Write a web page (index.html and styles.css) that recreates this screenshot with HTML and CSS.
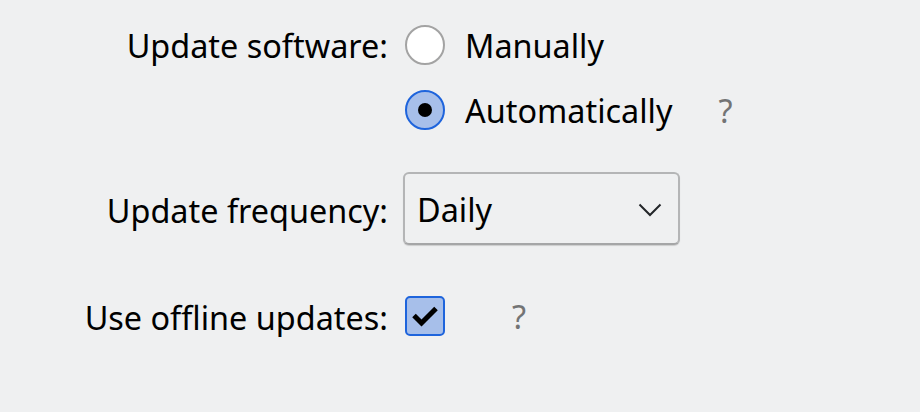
FILE: index.html
```html
<!DOCTYPE html>
<html lang="en">
<head>
    <meta charset="UTF-8">
    <title>Updates</title>
    <link rel="stylesheet" href="styles.css">
</head>
<body>
    <div class="form">
        <!-- Update software -->
        <div class="label row-software">Update software:</div>
        <div class="field">
            <label class="option">
                <span class="radio"></span>
                <span>Manually</span>
            </label>
            <label class="option">
                <span class="radio checked"></span>
                <span>Automatically</span>
                <span class="help help-auto">?</span>
            </label>
        </div>

        <!-- Frequency -->
        <div class="label row-freq">Update frequency:</div>
        <div class="field field-freq">
            <div class="select">
                <span>Daily</span>
                <svg class="chevron" width="24" height="14" viewBox="0 0 24 14">
                    <path d="M1.5 1.5 L12 12 L22.5 1.5" fill="none" stroke="#232629" stroke-width="2"/>
                </svg>
            </div>
        </div>

        <!-- Offline -->
        <div class="label row-offline">Use offline updates:</div>
        <div class="field field-offline">
            <span class="checkbox">
                <svg width="28" height="24" viewBox="0 0 28 24">
                    <path d="M3 11.5 L10.5 19 L25 4.5" fill="none" stroke="#000" stroke-width="5"/>
                </svg>
            </span>
            <span class="help help-offline">?</span>
        </div>
    </div>
</body>
</html>
```

FILE: styles.css
```css
body {
    margin: 0;
    background: #eff0f1;
    font-family: "Noto Sans", sans-serif;
    font-size: 32.4px;
    color: #232629;
}

.form {
    display: grid;
    grid-template-columns: 388px auto;
    column-gap: 17px;
    padding-top: 25px;
}

.label {
    text-align: right;
    color: #000;
    line-height: 40px;
}

.field {
    color: #000;
}

/* Radio options */
.option {
    display: flex;
    align-items: center;
    height: 40px;
    gap: 20px;
}

.option + .option {
    margin-top: 25px;
}

.radio {
    width: 36px;
    height: 36px;
    border: 2px solid #a3a3a3;
    border-radius: 50%;
    background: #fff;
    display: flex;
    align-items: center;
    justify-content: center;
}

.radio.checked {
    border-color: #1e64dc;
    background: #a7bfea;
}

.radio.checked::after {
    content: "";
    width: 14px;
    height: 14px;
    border-radius: 50%;
    background: #000;
}

.help {
    color: #737475;
}

.help-auto {
    margin-left: 26px;
}

/* Select */
.row-freq {
    margin-top: 60px;
}

.field-freq {
    margin-top: 42px;
    margin-left: -2px;
}

.select {
    box-sizing: border-box;
    width: 277px;
    height: 73px;
    border: 2px solid #b4b5b6;
    border-bottom-color: #a5a6a7;
    border-radius: 6px;
    background: #eff0f1;
    box-shadow: 0 1px 1px rgba(0, 0, 0, 0.15);
    display: flex;
    align-items: center;
    justify-content: space-between;
    padding: 0 16px 0 12px;
}

.chevron {
    margin-top: 2px;
}

/* Checkbox */
.row-offline {
    margin-top: 52px;
}

.field-offline {
    margin-top: 51px;
    display: flex;
    align-items: center;
    height: 40px;
}

.checkbox {
    box-sizing: border-box;
    width: 40px;
    height: 40px;
    border: 2px solid #1e64dc;
    border-radius: 5px;
    background: #a7bfea;
    display: flex;
    align-items: center;
    justify-content: center;
}

.help-offline {
    margin-left: 67px;
}
```
